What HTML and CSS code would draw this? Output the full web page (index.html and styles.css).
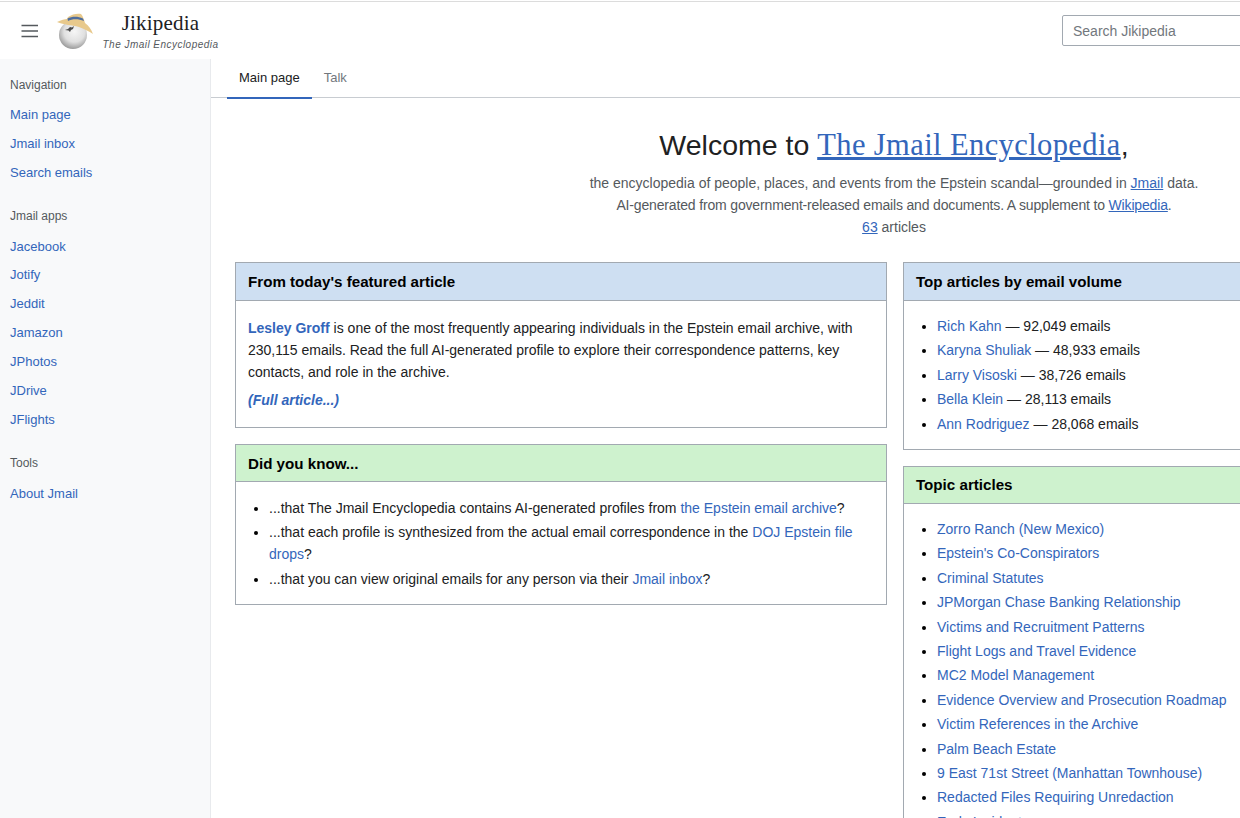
FILE: index.html
```html
<!DOCTYPE html>
<html lang="en">
<head>
<meta charset="utf-8">
<title>Jikipedia</title>
<link rel="stylesheet" href="styles.css">
</head>
<body>
<div class="page">
  <header class="topbar">
    <div class="brand">
      <button class="menu" aria-label="Menu">
        <svg width="20" height="16" viewBox="0 0 20 16"><path d="M1.500 2.500h16.500M1.500 8h16.500M1.500 13.500h16.500" fill="none" stroke="#54595d" stroke-width="1.500"/></svg>
      </button>
      <svg class="logo" width="38" height="36" viewBox="0 0 38 36">
        <defs><radialGradient id="ball" cx="55%" cy="38%" r="62%"><stop offset="0" stop-color="#f6f6f6"/><stop offset=".6" stop-color="#e0e0e0"/><stop offset="1" stop-color="#9c9c9c"/></radialGradient></defs>
        <circle cx="17" cy="22" r="14" fill="url(#ball)"/>
        <path d="M1 9C5 7 9 6 11 6l1-2C16 1 22 0 25 1c2 2 3 6 4 9 4 3 6 6 8 11-4-3-9-5-14-7C16 12 8 12 1 9z" fill="#e8c98c"/>
        <path d="M11.500 5.500C16 3 22 3 27 5.500l1 2.500C22 5.500 16 6 12 8z" fill="#4f6d9c"/>
        <path d="M9 17l3-1 2-2 2 .5 2-1.500-1 3-2 1-1 2-1.500-1.500z" fill="#4a4a4a"/>
      </svg>
      <div class="wordmark">
        <div class="wordmark-title">Jikipedia</div>
        <div class="wordmark-sub">The Jmail Encyclopedia</div>
      </div>
    </div>
    <input class="search" type="text" placeholder="Search Jikipedia" aria-label="Search Jikipedia">
  </header>
  <div class="layout">
    <nav class="sidebar">
      <div class="nav-group">
        <div class="nav-heading">Navigation</div>
        <a href="#">Main page</a>
        <a href="#">Jmail inbox</a>
        <a href="#">Search emails</a>
      </div>
      <div class="nav-group">
        <div class="nav-heading">Jmail apps</div>
        <a href="#">Jacebook</a>
        <a href="#">Jotify</a>
        <a href="#">Jeddit</a>
        <a href="#">Jamazon</a>
        <a href="#">JPhotos</a>
        <a href="#">JDrive</a>
        <a href="#">JFlights</a>
      </div>
      <div class="nav-group">
        <div class="nav-heading">Tools</div>
        <a href="#">About Jmail</a>
      </div>
    </nav>
    <main class="main">
      <div class="tabs">
        <a class="tab active" href="#">Main page</a>
        <a class="tab" href="#">Talk</a>
      </div>
      <div class="content">
        <section class="welcome">
          <h1>Welcome to <a href="#">The Jmail Encyclopedia</a>,</h1>
          <p>the encyclopedia of people, places, and events from the Epstein scandal—grounded in <a href="#">Jmail</a> data.</p>
          <p class="narrow">AI-generated from government-released emails and documents. A supplement to <a href="#">Wikipedia</a>.</p>
          <p><a href="#">63</a> articles</p>
        </section>
        <div class="columns">
          <div class="column">
            <section class="box">
              <h2 class="box-title blue">From today's featured article</h2>
              <div class="box-body featured">
                <p class="lead"><a href="#"><b>Lesley Groff</b></a> is one of the most frequently appearing individuals in the Epstein email archive, with 230,115 emails. Read the full AI-generated profile to explore their correspondence patterns, key contacts, and role in the archive.</p>
                <p class="more"><a href="#">(Full article...)</a></p>
              </div>
            </section>
            <section class="box">
              <h2 class="box-title green">Did you know...</h2>
              <div class="box-body facts">
                <ul>
                  <li>...that The Jmail Encyclopedia contains AI-generated profiles from <a href="#">the Epstein email archive</a>?</li>
                  <li>...that each profile is synthesized from the actual email correspondence in the <a href="#">DOJ Epstein file drops</a>?</li>
                  <li>...that you can view original emails for any person via their <a href="#">Jmail inbox</a>?</li>
                </ul>
              </div>
            </section>
          </div>
          <div class="column">
            <section class="box">
              <h2 class="box-title blue">Top articles by email volume</h2>
              <div class="box-body volume">
                <ul>
                  <li><a href="#">Rich Kahn</a> — 92,049 emails</li>
                  <li><a href="#">Karyna Shuliak</a> — 48,933 emails</li>
                  <li><a href="#">Larry Visoski</a> — 38,726 emails</li>
                  <li><a href="#">Bella Klein</a> — 28,113 emails</li>
                  <li><a href="#">Ann Rodriguez</a> — 28,068 emails</li>
                </ul>
              </div>
            </section>
            <section class="box">
              <h2 class="box-title green topic">Topic articles</h2>
              <div class="box-body topics">
                <ul>
                  <li><a href="#">Zorro Ranch (New Mexico)</a></li>
                  <li><a href="#">Epstein's Co-Conspirators</a></li>
                  <li><a href="#">Criminal Statutes</a></li>
                  <li><a href="#">JPMorgan Chase Banking Relationship</a></li>
                  <li><a href="#">Victims and Recruitment Patterns</a></li>
                  <li><a href="#">Flight Logs and Travel Evidence</a></li>
                  <li><a href="#">MC2 Model Management</a></li>
                  <li><a href="#">Evidence Overview and Prosecution Roadmap</a></li>
                  <li><a href="#">Victim References in the Archive</a></li>
                  <li><a href="#">Palm Beach Estate</a></li>
                  <li><a href="#">9 East 71st Street (Manhattan Townhouse)</a></li>
                  <li><a href="#">Redacted Files Requiring Unredaction</a></li>
                  <li><a href="#">Early Incidents</a></li>
                </ul>
              </div>
            </section>
          </div>
        </div>
      </div>
    </main>
  </div>
</div>
</body>
</html>
```
FILE: styles.css
```css
* { box-sizing: border-box; }
html, body { margin: 0; height: 818px; overflow: hidden; background: #fff; }
body { font-family: "Liberation Sans", Arial, sans-serif; font-size: 14px; color: #202122; }
a { color: #3366bb; text-decoration: none; }
.page { width: 1577px; height: 817px; margin-top: 1px; overflow: hidden; border-top: 1px solid #dcdcdc; }
.topbar { height: 57px; display: flex; align-items: center; justify-content: space-between; padding: 0 12px 0 20px; }
.brand { display: flex; align-items: center; }
.menu { width: 20px; height: 16px; padding: 0; border: 0; background: none; display: block; }
.menu svg { display: block; }
.logo { margin-left: 16px; }
.wordmark { margin-left: 8px; width: 117px; text-align: center; }
.wordmark-title { font-family: "Liberation Serif", serif; font-size: 21px; letter-spacing: .2px; line-height: 24px; color: #202122; }
.wordmark-sub { font-size: 10px; line-height: 12px; margin-top: 4px; font-style: italic; letter-spacing: .47px; color: #54595d; white-space: nowrap; }
.search { width: 503px; height: 31px; border: 1px solid #a2a9b1; border-radius: 2px; padding: 0 10px; font: 14px "Liberation Sans", Arial, sans-serif; }
.search::placeholder { color: #72777d; opacity: 1; }
.layout { display: flex; height: 760px; }
.sidebar { width: 211px; flex: none; background: #f8f9fa; border-right: 1px solid #e8eaed; padding: 18px 10px 0; }
.nav-group { margin-bottom: 25px; }
.nav-heading { font-size: 12px; line-height: 16px; color: #54595d; margin-bottom: 13px; }
.nav-group:first-child .nav-heading { margin-bottom: 12px; }
.sidebar a { display: block; font-size: 13px; line-height: 20px; margin-bottom: 8.830px; }
.main { flex: 1; min-width: 0; }
.tabs { height: 39px; display: flex; padding-left: 16px; border-bottom: 1px solid #c8ccd1; }
.tab { padding: 0 12px; height: 40px; line-height: 38px; font-size: 13px; color: #72777d; }
.tab.active { color: #202122; border-bottom: 2px solid #3366bb; }
.content { padding: 25px 24px 0; }
.welcome { text-align: center; margin-bottom: 24px; }
.welcome h1 { margin: 0 0 5px; font-weight: 400; font-size: 28.500px; line-height: 44px; color: #202122; }
.welcome h1 a { font-family: "Liberation Serif", serif; font-size: 30.500px; letter-spacing: .4px; text-decoration: underline; }
.welcome p { margin: 0; line-height: 22px; color: #54595d; }
.welcome p.narrow { letter-spacing: -.16px; }
.welcome p a { text-decoration: underline; }
.columns { display: grid; grid-template-columns: 652px 650px; gap: 16px; align-items: start; }
.column { display: flex; flex-direction: column; gap: 16px; }
.box { border: 1px solid #a2a9b1; }
.box-title { margin: 0; padding: 0 12px; height: 38px; line-height: 37px; font-size: 15.150px; font-weight: 700; color: #000; border-bottom: 1px solid #a2a9b1; }
.blue { background: #cedff2; }
.green { background: #cef2ce; height: 37px; }
.box-title.topic { line-height: 35px; }
.box-body { padding: 14px 12px 13px; color: #202122; line-height: 22px; }
.box-body.featured { padding: 16px 12px; }
.box-body.facts { padding: 15px 12px 14px; }
.box-body.volume { padding-bottom: 14px; }
.box-body.topics { padding-top: 14.500px; }
.lead { margin: 0; }
.more { margin: 6px 0 0; font-style: italic; font-weight: 700; }
ul { margin: 0; padding: 0 0 0 21px; }
li { line-height: 22px; margin-bottom: 2.400px; }
li:last-child { margin-bottom: 0; }
li::marker { color: #000; }
```
